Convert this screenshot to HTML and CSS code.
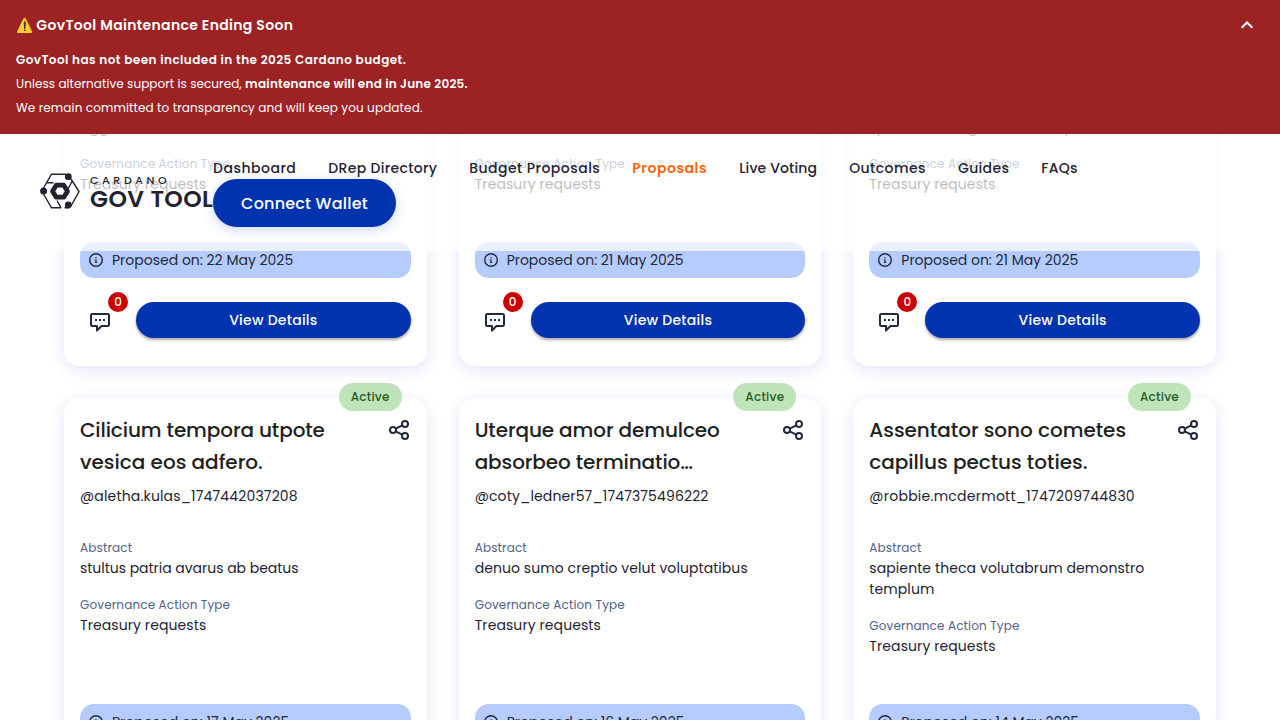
FILE: index.html
```html
<!DOCTYPE html>
<html lang="en">
<head>
<meta charset="utf-8">
<title>GovTool</title>
<link rel="stylesheet" href="styles.css">
</head>
<body>
<svg class="defs" aria-hidden="true">
  <symbol id="share" viewBox="0 0 24 24"><g fill="none" stroke="currentColor" stroke-width="2"><circle cx="6" cy="12" r="3"/><circle cx="18" cy="6" r="3"/><circle cx="18" cy="18" r="3"/><path d="M8.700 10.700l6.600-3.400M8.700 13.300l6.600 3.400"/></g></symbol>
  <symbol id="info" viewBox="0 0 16 16"><circle cx="8" cy="8" r="6.300" fill="none" stroke="currentColor" stroke-width="1.400"/><path d="M7.300 5.200h1.300v1.200H7.300zM6.800 7.400h1.800v2.500h.6v1H7v-1h.4V8.400h-.6z" fill="currentColor"/></symbol>
  <symbol id="comment" viewBox="0 0 24 24"><path d="M4.200 4h15.600a1.200 1.200 0 0 1 1.200 1.200v9.600a1.200 1.200 0 0 1-1.200 1.200h-6.300L9 20.500V16H4.200A1.200 1.200 0 0 1 3 14.800V5.200A1.200 1.200 0 0 1 4.200 4z" fill="none" stroke="currentColor" stroke-width="2" stroke-linejoin="round"/><path d="M7 9h2v2H7zM11 9h2v2h-2zM15 9h2v2h-2z" fill="currentColor"/></symbol>
</svg>

<div class="top">
  <section class="banner">
    <div class="banner-head">
      <h2 class="banner-title">⚠️ <span class="ls-33">GovTool Maintenance Ending Soon</span></h2>
      <svg class="chevron" viewBox="0 0 24 24"><path d="M6.700 14.700L12 9.400l5.300 5.300" fill="none" stroke="currentColor" stroke-width="2.100"/></svg>
    </div>
    <p class="banner-line"><b class="ls-45">GovTool has not been included in the 2025 Cardano budget.</b></p>
    <p class="banner-line ls-07">Unless alternative support is secured, <b class="ls-25">maintenance will end in June 2025.</b></p>
    <p class="banner-line ls-12">We remain committed to transparency and will keep you updated.</p>
  </section>
  <header class="header">
    <a class="logo">
      <svg class="logo-mark" viewBox="0 0 40 36">
        <g fill="none" stroke="#242232" stroke-width="1.400">
          <path d="M26 1.200H11.500L3.500 15M3.500 21l8 13.800H21M31 6l8 12.500L31 33M24.500 34.800H28M6 9.800h7.500M17 27.500l4 7.300M32 8.500L27.500 17"/>
        </g>
        <path d="M16.200 12.200h7.600l3.700 6-3.700 6h-7.600l-3.700-6z" fill="none" stroke="#242232" stroke-width="4.800" stroke-linejoin="round"/>
        <circle cx="28.300" cy="3.700" r="3.400" fill="#242232"/><circle cx="3.600" cy="18" r="3.500" fill="#242232"/><circle cx="28.300" cy="32" r="3.400" fill="#242232"/>
      </svg>
      <span class="logo-text"><span class="logo-small">CARDANO</span><span class="logo-big">GOV TOOL</span></span>
    </a>
    <div class="nav">
      <nav class="links">
        <a class="ls-50">Dashboard</a><a class="ls-33">DRep Directory</a><a class="ls-47">Budget Proposals</a><a class="active">Proposals</a><a class="ls-14">Live Voting</a><a class="ls-45">Outcomes</a><a class="ls-33">Guides</a><a class="ls-25">FAQs</a>
      </nav>
      <button class="connect">Connect Wallet</button>
    </div>
  </header>
</div>

<main class="grid">
  <article class="card">
    <div class="facts">
      <p class="value">agger</p>
      <p class="label">Governance Action Type</p><p class="value ls-09">Treasury requests</p>
    </div>
    <div class="date"><svg><use href="#info"/></svg><span>Proposed on: 22 May 2025</span></div>
    <div class="actions"><span class="comments"><svg><use href="#comment"/></svg><i class="badge">0</i></span><button class="details">View Details</button></div>
  </article>
  <article class="card">
    <div class="facts">
      <p class="value">tumultus</p>
      <p class="label">Governance Action Type</p><p class="value ls-09">Treasury requests</p>
    </div>
    <div class="date"><svg><use href="#info"/></svg><span class="tight">Proposed on: 21 May 2025</span></div>
    <div class="actions"><span class="comments"><svg><use href="#comment"/></svg><i class="badge">0</i></span><button class="details">View Details</button></div>
  </article>
  <article class="card">
    <div class="facts">
      <p class="value ls-07">spero textus ego victoria caput</p>
      <p class="label">Governance Action Type</p><p class="value ls-09">Treasury requests</p>
    </div>
    <div class="date"><svg><use href="#info"/></svg><span class="tight">Proposed on: 21 May 2025</span></div>
    <div class="actions"><span class="comments"><svg><use href="#comment"/></svg><i class="badge">0</i></span><button class="details">View Details</button></div>
  </article>

  <article class="card tall">
    <span class="chip">Active</span>
    <div class="title-row"><h3 class="title"><span class="tighter">Cilicium tempora utpote</span> vesica eos adfero.</h3><svg class="share"><use href="#share"/></svg></div>
    <p class="user ls-16">@aletha.kulas_1747442037208</p>
    <div class="facts">
      <p class="label">Abstract</p><p class="value tight">stultus patria avarus ab beatus</p>
      <p class="label">Governance Action Type</p><p class="value ls-09">Treasury requests</p>
    </div>
    <div class="date"><svg><use href="#info"/></svg><span>Proposed on: 17 May 2025</span></div>
    <div class="actions"><span class="comments"><svg><use href="#comment"/></svg><i class="badge">0</i></span><button class="details">View Details</button></div>
  </article>
  <article class="card tall">
    <span class="chip">Active</span>
    <div class="title-row"><h3 class="title tighter">Uterque amor demulceo absorbeo terminatio…</h3><svg class="share"><use href="#share"/></svg></div>
    <p class="user ls-14">@coty_ledner57_1747375496222</p>
    <div class="facts">
      <p class="label">Abstract</p><p class="value ls-07">denuo sumo creptio velut voluptatibus</p>
      <p class="label">Governance Action Type</p><p class="value ls-09">Treasury requests</p>
    </div>
    <div class="date"><svg><use href="#info"/></svg><span class="tight">Proposed on: 16 May 2025</span></div>
    <div class="actions"><span class="comments"><svg><use href="#comment"/></svg><i class="badge">0</i></span><button class="details">View Details</button></div>
  </article>
  <article class="card tall">
    <span class="chip">Active</span>
    <div class="title-row"><h3 class="title tight">Assentator sono cometes capillus pectus toties.</h3><svg class="share"><use href="#share"/></svg></div>
    <p class="user ls-25">@robbie.mcdermott_1747209744830</p>
    <div class="facts">
      <p class="label">Abstract</p><p class="value ls-09">sapiente theca volutabrum demonstro templum</p>
      <p class="label">Governance Action Type</p><p class="value ls-09">Treasury requests</p>
    </div>
    <div class="date"><svg><use href="#info"/></svg><span class="tight">Proposed on: 14 May 2025</span></div>
    <div class="actions"><span class="comments"><svg><use href="#comment"/></svg><i class="badge">0</i></span><button class="details">View Details</button></div>
  </article>
</main>
</body>
</html>
```
FILE: styles.css
```css
* { box-sizing: border-box; margin: 0; padding: 0; }
body { position: relative; height: 720px; overflow: hidden; background: #fff; color: #212a3d; font: 400 14px/21px Poppins, Inter, "Open Sans", sans-serif; }
button { border: 0; font: inherit; color: #fff; }
.defs { position: absolute; width: 0; height: 0; }

/* Banner and translucent header over the scrolled page */
.top { position: absolute; top: 0; left: 0; width: 100%; z-index: 5; }
.banner { height: 134px; padding: 13px 16px 0; background: #9c2224; color: #fff; }
.banner-head { display: flex; align-items: center; justify-content: space-between; height: 24px; margin-bottom: 11px; padding-right: 5px; }
.banner-title { font-size: 14px; line-height: 24px; font-weight: 600; }
.chevron { width: 24px; height: 24px; }
.banner-line { font-size: 12px; line-height: 24px; }
.banner-line b { font-weight: 600; }
.header { display: flex; height: 117px; padding: 24px 40px; background: rgba(255, 255, 255, .7); color: #242232; }
.logo { display: flex; gap: 10px; width: 173px; padding-top: 15px; }
.logo-mark { flex: none; width: 40px; height: 36px; }
.logo-text { display: flex; flex-direction: column; padding-top: 1px; white-space: nowrap; }
.logo-small { font-size: 11px; line-height: 13px; font-weight: 500; letter-spacing: 3.6px; }
.logo-big { font-size: 23.5px; line-height: 24px; font-weight: 600; letter-spacing: .4px; }
.links { display: flex; gap: 32px; font-weight: 500; white-space: nowrap; }
.links .active { color: #ff640a; font-weight: 600; letter-spacing: .53px; }
.connect { display: block; width: 183px; height: 48px; border-radius: 24px; background: #0033ad; font-size: 16px; font-weight: 500; letter-spacing: .2px; box-shadow: 0 3px 12px rgba(47, 98, 220, .25); }

/* Proposal cards */
.grid { display: grid; grid-template-columns: repeat(3, 1fr); gap: 32px; padding: 101px 64px 0; }
.card { position: relative; display: flex; flex-direction: column; height: 265px; padding: 16px 16px 28px; border-radius: 16px; background: #fff; box-shadow: 0 4px 15px rgba(47, 74, 211, .14); }
.card.tall { height: 430px; }
.chip { position: absolute; top: -15px; right: 25px; height: 28px; padding: 0 12px; border-radius: 14px; background: #c0e4ba; color: #275c26; font-size: 12px; line-height: 28px; font-weight: 500; letter-spacing: .25px; }
.title-row { display: flex; gap: 16px; justify-content: space-between; }
.title { width: 275px; color: #212121; font-size: 20px; line-height: 32px; font-weight: 500; }
.share { flex: none; width: 24px; height: 24px; margin-top: 4px; }
.user { margin: 8px 0 31px; }
.value { margin-bottom: 16px; color: #212121; }
.label { color: #506288; font-size: 12px; line-height: 20px; letter-spacing: .14px; }
.user, .tall .value { color: #242232; }
.date { display: flex; align-items: center; gap: 8px; height: 36px; margin-top: auto; padding: 0 8px; border-radius: 14px; background: #b6ccff; }
.date svg { width: 16px; height: 16px; }
.actions { display: flex; align-items: center; gap: 16px; margin-top: 24px; }
.comments { position: relative; display: flex; width: 40px; height: 36px; padding: 8px 8px 0; }
.comments svg { width: 24px; height: 24px; }
.badge { position: absolute; top: -10px; right: -8px; width: 20px; height: 20px; border-radius: 10px; background: #cc0000; color: #fff; font: 500 12px/20px Poppins, Inter, sans-serif; text-align: center; }
.details { flex: 1; height: 36px; border-radius: 18px; background: #0033ad; font-weight: 500; letter-spacing: .25px; box-shadow: 0 2px 3px rgba(0, 0, 0, .35); }

/* Tracking steps */
.tighter { letter-spacing: -.11px; }
.tight { letter-spacing: -.03px; }
.ls-07 { letter-spacing: .07px; }
.ls-09 { letter-spacing: .09px; }
.ls-12 { letter-spacing: .12px; }
.ls-14 { letter-spacing: .14px; }
.ls-16 { letter-spacing: .16px; }
.ls-25 { letter-spacing: .25px; }
.ls-33 { letter-spacing: .33px; }
.ls-45 { letter-spacing: .45px; }
.ls-47 { letter-spacing: .47px; }
.ls-50 { letter-spacing: .5px; }
```
